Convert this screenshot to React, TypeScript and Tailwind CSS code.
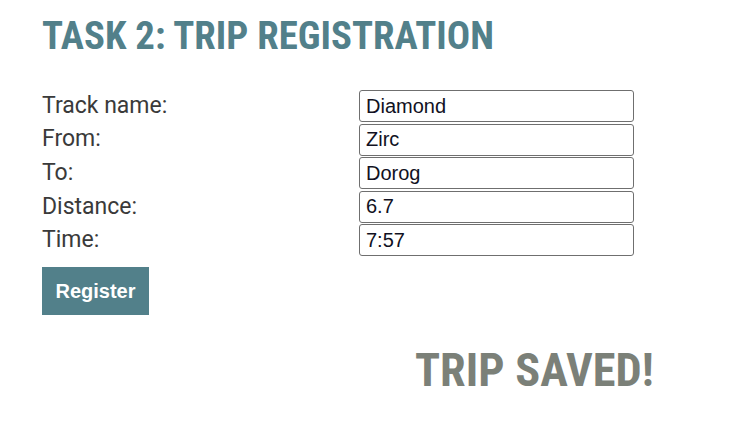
import { useState } from 'react';

interface Field {
    readonly key: string;
    readonly label: string;
    readonly value: string;
}

const fields: Field[] = [
    { key: 'name', label: 'Track name:', value: 'Diamond' },
    { key: 'from', label: 'From:', value: 'Zirc' },
    { key: 'to', label: 'To:', value: 'Dorog' },
    { key: 'distance', label: 'Distance:', value: '6.7' },
    { key: 'time', label: 'Time:', value: '7:57' },
];

export default function App() {
    const [values, setValues] = useState<Record<string, string>>(
        Object.fromEntries(fields.map(f => [f.key, f.value]))
    );

    return (
        <div className="w-[742px] h-[437px] bg-white overflow-hidden">
            <div className="pl-[42px] pt-[16px]">
                <h1 className="text-[#52808a] text-[38.8px] leading-[40px] font-bold [font-family:'Roboto_Condensed','Roboto',sans-serif]">
                    TASK 2: TRIP REGISTRATION
                </h1>
                <form className="mt-[34px]" onSubmit={e => e.preventDefault()}>
                    <div className="flex flex-col gap-[1.6px]">
                        {fields.map(f => (
                            <div key={f.key} className="flex items-center h-[32px]">
                                <label className="w-[317px] text-[23px] text-[#3a3a3a] [font-family:'Roboto',sans-serif]">
                                    {f.label}
                                </label>
                                <input
                                    className="w-[275px] h-[32px] border border-[#6f6f6f] rounded-[3px] px-[6px] text-[20px] text-[#111122] [font-family:'Liberation_Sans',Arial,sans-serif]"
                                    value={values[f.key]}
                                    onChange={e => setValues({ ...values, [f.key]: e.target.value })}
                                />
                            </div>
                        ))}
                    </div>
                    <button
                        type="submit"
                        className="mt-[11px] w-[107px] h-[48px] bg-[#52808a] text-white text-[20px] font-bold [font-family:'Liberation_Sans',Arial,sans-serif]"
                    >
                        Register
                    </button>
                </form>
                <div className="mt-[30px] pl-[373px] text-[#7b8078] text-[46.3px] leading-[50px] font-bold [font-family:'Roboto_Condensed','Roboto',sans-serif]">
                    TRIP SAVED!
                </div>
            </div>
        </div>
    );
}
